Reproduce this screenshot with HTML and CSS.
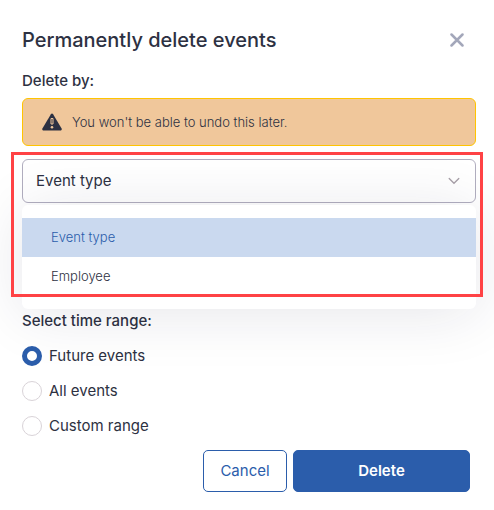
FILE: index.html
```html
<!DOCTYPE html>
<html lang="en">
<head>
<meta charset="utf-8">
<title>Permanently delete events</title>
<meta name="viewport" content="width=device-width, initial-scale=1">
<link rel="stylesheet" href="styles.css">
</head>
<body>
<form class="dialog" role="dialog" aria-labelledby="dialog-title">
  <header class="dialog-header">
    <h1 id="dialog-title" class="dialog-title">Permanently delete events</h1>
    <button type="button" class="close" aria-label="Close">
      <svg width="14" height="14" viewBox="0 0 14 14" aria-hidden="true"><path d="M1.500 1.500l11 11M12.500 1.500l-11 11" fill="none" stroke="currentColor" stroke-width="2.500" stroke-linecap="round"/></svg>
    </button>
  </header>

  <div class="content">
    <label class="field-label" for="delete-by">Delete by:</label>
    <div class="alert" role="note">
      <svg class="alert-icon" width="20" height="18" viewBox="0 0 20 18" aria-hidden="true"><path fill="#2d3142" d="M8.900 1.200a1.300 1.300 0 0 1 2.200 0l8.500 14.400c.5.900-.1 1.900-1.100 1.900h-17c-1 0-1.600-1-1.100-1.900z"/><path d="M9 5.500h2v5.500H9z" fill="#2d3142" stroke="#f0c79b" stroke-width="1"/><circle cx="10" cy="14.200" r="1.300" fill="#f0c79b"/></svg>
      <span>You won't be able to undo this later.</span>
    </div>

    <div class="picker">
      <select id="delete-by" class="picker-select">
        <option>Event type</option>
        <option>Employee</option>
      </select>
      <svg class="picker-arrow" width="12" height="8" viewBox="0 0 12 8" aria-hidden="true"><path d="M1.200 1.500L6 6.300l4.800-4.800" fill="none" stroke="currentColor" stroke-width="1.300" stroke-linecap="round"/></svg>
      <ul class="menu" role="listbox" aria-label="Delete by">
        <li class="menu-item selected" role="option" aria-selected="true">Event type</li>
        <li class="menu-item" role="option" aria-selected="false">Employee</li>
      </ul>
    </div>

    <fieldset class="range">
      <legend class="field-label">Select time range:</legend>
      <div class="radios">
        <label class="radio"><input type="radio" name="range" checked>Future events</label>
        <label class="radio"><input type="radio" name="range">All events</label>
        <label class="radio"><input type="radio" name="range">Custom range</label>
      </div>
    </fieldset>
  </div>

  <footer class="actions">
    <button type="button" class="button cancel">Cancel</button>
    <button type="submit" class="button delete">Delete</button>
  </footer>
</form>
</body>
</html>
```

FILE: styles.css
```css
* {
  box-sizing: border-box;
}

body {
  margin: 0;
  background: #fff;
  color: #2d3142;
  font: 15px/20px Inter, "Liberation Sans", sans-serif;
  overflow-x: hidden;
}

button,
select {
  font: inherit;
  cursor: pointer;
}

.dialog {
  padding: 26px 18px 18px 22px;
}

.dialog-header {
  display: flex;
  align-items: center;
  justify-content: space-between;
  height: 28px;
  margin-bottom: 17px;
  padding-right: 12px;
}

.dialog-title {
  margin: 0;
  font-size: 20px;
  font-weight: 500;
  line-height: 28px;
}

.close {
  display: flex;
  padding: 0;
  border: 0;
  background: none;
  color: #a3a7ba;
}

.field-label {
  display: block;
  padding: 0;
  font-weight: 500;
}

.alert {
  display: flex;
  align-items: center;
  gap: 10px;
  height: 48px;
  margin: 7px 0 13px;
  padding: 0 19px;
  border: 1px solid #ffc400;
  border-radius: 6px;
  background: #f0c79b;
  font-size: 13px;
  font-weight: 300;
}

.picker {
  position: relative;
}

/* Highlight frame around the open picker */
.picker::after {
  content: "";
  position: absolute;
  z-index: 3;
  inset: -7px -7px -94px -11px;
  border: 3px solid #ff4245;
  pointer-events: none;
}

.picker-select {
  display: block;
  width: 100%;
  height: 44px;
  padding: 0 40px 0 13px;
  border: 1px solid #b1aebf;
  border-radius: 6px;
  background: transparent;
  color: inherit;
  appearance: none;
}

.picker-arrow {
  position: absolute;
  top: 18px;
  right: 16px;
  color: #a79fa8;
  pointer-events: none;
}

.menu {
  position: absolute;
  z-index: 2;
  top: 46px;
  left: 0;
  right: 0;
  margin: 0;
  padding: 13px 0;
  border-radius: 6px;
  background: #fff;
  box-shadow: 0 5px 60px rgba(30, 30, 60, 0.11);
  list-style: none;
  font-size: 13px;
  font-weight: 300;
}

.menu-item {
  padding: 0 29px;
  line-height: 39px;
}

.menu-item.selected {
  background: #cad9ef;
  color: #2b5dab;
}

.range {
  min-width: 0;
  margin: 108px 0 0;
  padding: 0;
  border: 0;
}

.radios {
  display: grid;
  gap: 15px;
  padding-top: 15px;
}

.radio {
  display: flex;
  align-items: center;
  gap: 7px;
}

.radio input {
  width: 20px;
  height: 20px;
  margin: 0;
  border: 1px solid #d9d3d8;
  border-radius: 50%;
  background: #fff;
  appearance: none;
}

.radio input:checked {
  border: 5px solid #2b5dab;
}

.actions {
  display: flex;
  justify-content: flex-end;
  gap: 6px;
  margin-top: 14px;
  padding-right: 6px;
}

.button {
  height: 42px;
  border: 1px solid #2b5dab;
  border-radius: 5px;
}

.cancel {
  flex: 0 1 84px;
  background: #fff;
  color: #2b5dab;
}

.delete {
  flex: 0 1 177px;
  background: #2b5dab;
  color: #fff;
  font-weight: 600;
}
```
